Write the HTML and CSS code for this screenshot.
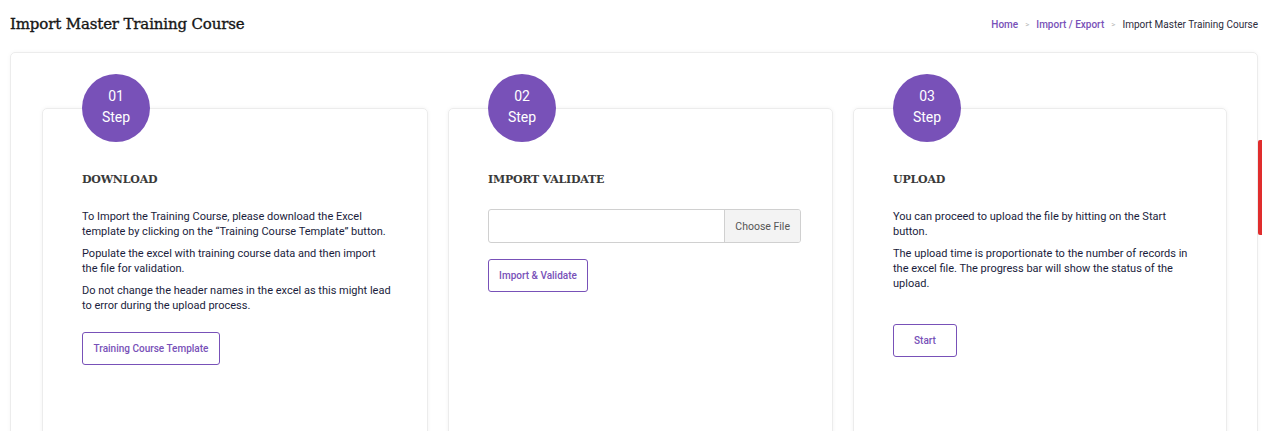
FILE: index.html
```html
<!DOCTYPE html>
<html lang="en">
<head>
  <meta charset="UTF-8">
  <meta name="viewport" content="width=device-width, initial-scale=1.0">
  <title>Import Master Training Course</title>
  <link rel="stylesheet" href="styles.css">
</head>
<body>
  <div class="page-header">
    <h1 class="page-title">Import Master Training Course</h1>
    <nav class="breadcrumb">
      <a href="#">Home</a>
      <span class="sep">&gt;</span>
      <a href="#">Import / Export</a>
      <span class="sep">&gt;</span>
      <span class="current">Import Master Training Course</span>
    </nav>
  </div>

  <div class="main-card">
    <div class="steps">
      <div class="step-card">
        <div class="step-badge"><span>01</span><span>Step</span></div>
        <h3 class="step-title">DOWNLOAD</h3>
        <p>To Import the Training Course, please download the Excel template by clicking on the “Training Course Template” button.</p>
        <p>Populate the excel with training course data and then import<br> the file for validation.</p>
        <p>Do not change the header names in the excel as this might lead to error during the upload process.</p>
        <button class="btn-outline btn-template">Training Course Template</button>
      </div>

      <div class="step-card">
        <div class="step-badge"><span>02</span><span>Step</span></div>
        <h3 class="step-title">IMPORT VALIDATE</h3>
        <label class="file-input">
          <span class="file-name"></span>
          <span class="file-btn">Choose File</span>
        </label>
        <button class="btn-outline btn-validate">Import &amp; Validate</button>
      </div>

      <div class="step-card">
        <div class="step-badge"><span>03</span><span>Step</span></div>
        <h3 class="step-title">UPLOAD</h3>
        <p>You can proceed to upload the file by hitting on the Start button.</p>
        <p>The upload time is proportionate to the number of records in the excel file. The progress bar will show the status of the upload.</p>
        <button class="btn-outline btn-start">Start</button>
      </div>
    </div>
  </div>

  <div class="side-tab"></div>
</body>
</html>
```

FILE: styles.css
```css
:root {
  --purple: #7851b8;
  --text-dark: #1a1d3c;
  --heading: #3a3a3a;
  --border: #ececec;
  --font-sans: 'Roboto', 'Liberation Sans', sans-serif;
  --font-slab: 'DejaVu Serif', 'Liberation Serif', serif;
}

* {
  margin: 0;
  padding: 0;
  box-sizing: border-box;
}

body {
  font-family: var(--font-sans);
  background: #fff;
  color: var(--text-dark);
  padding: 0 4px 0 10px;
  overflow: hidden;
}

/* header */
.page-header {
  display: flex;
  justify-content: space-between;
  align-items: center;
  height: 52px;
  padding-bottom: 4px;
}

.page-title {
  font-family: var(--font-slab);
  font-size: 15px;
  font-weight: 500;
  color: #161616;
  letter-spacing: -0.15px;
  -webkit-text-stroke: 0.35px #161616;
}

.breadcrumb {
  display: flex;
  align-items: center;
  gap: 7px;
  font-size: 10px;
}

.breadcrumb a {
  color: var(--purple);
  text-decoration: none;
  font-weight: 500;
}

.breadcrumb .sep {
  color: #b8b8b8;
  font-size: 8px;
}

.breadcrumb .current {
  color: #2b2b3b;
}

/* outer card */
.main-card {
  border: 1px solid var(--border);
  border-radius: 5px;
  box-shadow: 0 0 4px rgba(0, 0, 0, 0.04);
  padding: 55px 30px 0 31px;
  height: 420px;
}

.steps {
  display: grid;
  grid-template-columns: 386px 385px 1fr;
  gap: 20px;
}

.step-card {
  position: relative;
  border: 1px solid var(--border);
  border-radius: 5px;
  box-shadow: 0 0 4px rgba(0, 0, 0, 0.05);
  padding: 64px 30px 0 39px;
  min-height: 400px;
}

.step-badge {
  position: absolute;
  top: -35px;
  left: 39px;
  width: 68px;
  height: 68px;
  border-radius: 50%;
  background: var(--purple);
  color: #fff;
  display: flex;
  flex-direction: column;
  align-items: center;
  justify-content: center;
  font-size: 14px;
  line-height: 21px;
  font-weight: 400;
  padding-bottom: 3px;
}

.step-title {
  font-family: var(--font-slab);
  font-size: 11px;
  font-weight: 700;
  color: var(--heading);
  letter-spacing: -0.2px;
  margin-bottom: 23px;
}

.step-card p {
  font-size: 11px;
  line-height: 15px;
  margin-bottom: 7px;
  max-width: 312px;
}

.btn-outline {
  font-family: var(--font-sans);
  background: #fff;
  border: 1px solid var(--purple);
  border-radius: 3px;
  color: var(--purple);
  font-size: 10px;
  font-weight: 500;
  height: 33px;
  padding: 0 9px;
  cursor: pointer;
}

.btn-template {
  width: 138px;
  margin-top: 12px;
}

.btn-start {
  width: 64px;
  margin-top: 26px;
}

.file-input {
  display: flex;
  height: 34px;
  width: 313px;
  border: 1px solid #d0d0d0;
  border-radius: 3px;
  overflow: hidden;
  margin-top: 11px;
}

.file-name {
  flex: 1;
}

.file-btn {
  display: flex;
  align-items: center;
  padding: 0 10px;
  background: #f3f3f3;
  border-left: 1px solid #d0d0d0;
  font-size: 10.5px;
  color: #555;
}

.btn-validate {
  display: block;
  width: 100px;
  margin-top: 16px;
}

.side-tab {
  position: absolute;
  top: 140px;
  right: 0;
  width: 4px;
  height: 95px;
  background: #e02d2d;
  border-radius: 2px 0 0 2px;
}
```
